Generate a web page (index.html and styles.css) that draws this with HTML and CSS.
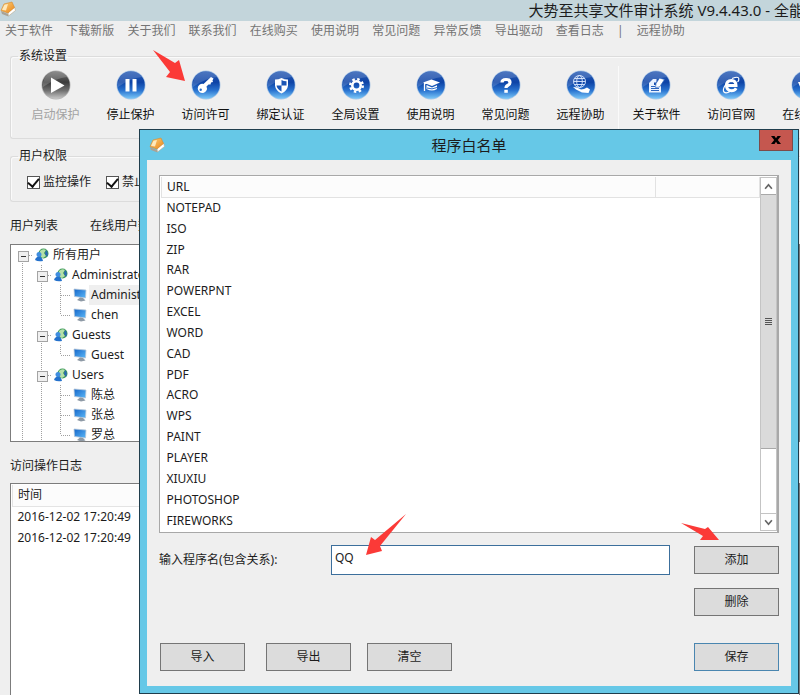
FILE: index.html
```html
<!DOCTYPE html>
<html lang="zh-CN">
<head>
<meta charset="utf-8">
<title>大势至共享文件审计系统</title>
<link rel="stylesheet" href="styles.css">
</head>
<body>
<svg class="defs" aria-hidden="true">
  <defs>
    <linearGradient id="blue" x1="0" y1="0" x2="0" y2="1">
      <stop offset="0" stop-color="#2a5cb4"/><stop offset=".4" stop-color="#0d43a6"/><stop offset=".7" stop-color="#2a74d0"/><stop offset="1" stop-color="#7cc8f8"/>
    </linearGradient>
    <linearGradient id="gray" x1="0" y1="0" x2="0" y2="1">
      <stop offset="0" stop-color="#707070"/><stop offset=".4" stop-color="#3c3c3c"/><stop offset=".7" stop-color="#707070"/><stop offset="1" stop-color="#c8c8c8"/>
    </linearGradient>
    <linearGradient id="gold" x1="0" y1="0" x2="1" y2="1">
      <stop offset="0" stop-color="#ffd27a"/><stop offset="1" stop-color="#e8851a"/>
    </linearGradient>
    <linearGradient id="screen" x1="0" y1="0" x2="1" y2="1">
      <stop offset="0" stop-color="#1565c8"/><stop offset="1" stop-color="#5cb8f8"/>
    </linearGradient>
    <symbol id="ball" viewBox="0 0 30 30">
      <circle cx="15" cy="15" r="14.5" fill="#a9c6e6"/>
      <circle cx="15" cy="15" r="13.8" fill="url(#blue)"/>
      <path d="M2 12A13.4 13.4 0 0 1 26 7Q15 8 2 17Z" fill="#fff" opacity=".16"/>
    </symbol>
    <symbol id="ball-gray" viewBox="0 0 30 30">
      <circle cx="15" cy="15" r="14.5" fill="#b5b5b5"/>
      <circle cx="15" cy="15" r="13.8" fill="url(#gray)"/>
      <path d="M2 12A13.4 13.4 0 0 1 26 7Q15 8 2 17Z" fill="#fff" opacity=".2"/>
    </symbol>
    <symbol id="app" viewBox="0 0 16 16">
      <path d="M1 10L8 13L8.500 15.500L2 13Z" fill="#a9a294"/>
      <path d="M8.500 15L8 11.500L14.500 6L15.500 9.500Z" fill="#fff" stroke="#b9a98c" stroke-width=".6"/>
      <path d="M4 3L12 1L14.500 6.500L8 12L1 9.500Z" fill="url(#gold)" stroke="#d98a2c" stroke-width=".6"/>
      <path d="M4.500 3.700L8 3L6 9.500L2 8.800Z" fill="#fff2cf" opacity=".85"/>
    </symbol>
    <symbol id="group" viewBox="0 0 14 14">
      <circle cx="8.500" cy="5.500" r="5" fill="#3d9a5b"/>
      <path d="M5 3Q8 0 11 2L9 5L11 8L8 10Q5 9 5 6Z" fill="#b5e0a8"/>
      <path d="M11 2Q14 5 12 9L10 6Z" fill="#2b68b4"/>
      <circle cx="4" cy="6.500" r="2.500" fill="#3f8ee0"/>
      <path d="M0 12Q1 8.500 4 8.500T8 13Q3 14 0 12Z" fill="#2471cc"/>
    </symbol>
    <symbol id="pc" viewBox="0 0 14 14">
      <path d="M1 1L13 2L12.500 10L1.500 8.500Z" fill="url(#screen)" stroke="#b8c8d8" stroke-width=".8"/>
      <path d="M7 9.500L10 10L12.500 12.500L8 13.500L4 12Z" fill="#8e9aa6"/>
    </symbol>
  </defs>
</svg>

<div class="window">
  <header class="titlebar">
    <svg class="app-icon"><use href="#app"/></svg>
    <h1 class="title">大势至共享文件审计系统 V9.4.43.0 - 全能</h1>
  </header>

  <nav class="menu">
    <a href="#">关于软件</a><a href="#">下载新版</a><a href="#">关于我们</a><a href="#">联系我们</a><a href="#">在线购买</a><a href="#">使用说明</a><a href="#">常见问题</a><a href="#">异常反馈</a><a href="#">导出驱动</a><a href="#">查看日志</a><span>|</span><a href="#">远程协助</a>
  </nav>

  <main class="body">
    <fieldset class="group">
      <legend>系统设置</legend>
      <div class="toolbar">
        <div class="tools">
          <button class="tool" disabled><svg viewBox="0 0 30 30"><use href="#ball-gray"/><path d="M10 7.500L23.500 15.500L10 23Z" fill="#fff"/></svg>启动保护</button>
          <button class="tool"><svg viewBox="0 0 30 30"><use href="#ball"/><path d="M9.500 9H13.500V21.500H9.500ZM16.500 9H20.500V21.500H16.500Z" fill="#fff"/></svg>停止保护</button>
          <button class="tool"><svg viewBox="0 0 30 30"><use href="#ball"/><path d="M20 7L22.500 8.500L21.500 10.500L22 12L20 12.500L19.500 14.500L17.500 14.500L15.500 16.500A4.600 4.600 0 1 1 12.500 14Z" fill="#fff"/><circle cx="9.700" cy="19.800" r="1.200" fill="#2a6cc8"/></svg>访问许可</button>
          <button class="tool"><svg viewBox="0 0 30 30"><use href="#ball"/><path d="M15.500 8Q18.500 9.500 22 9.500V15.500Q21.500 20.500 15.500 23.500Q9.500 20.500 9 15.500V9.500Q12.500 9.500 15.500 8Z" fill="#fff"/><path d="M15.500 10V15.500H20.500V11.200Q17.500 11.200 15.500 10ZM15.500 15.500V21.500Q11 19 10.500 15.500Z" fill="#1b55b5"/></svg>绑定认证</button>
          <button class="tool"><svg viewBox="0 0 30 30"><use href="#ball"/><circle cx="15.500" cy="15.500" r="4.200" fill="none" stroke="#fff" stroke-width="2.600"/><circle cx="15.500" cy="15.500" r="6.300" fill="none" stroke="#fff" stroke-width="2.400" stroke-dasharray="2.470 2.470"/></svg>全局设置</button>
          <button class="tool"><svg viewBox="0 0 30 30"><use href="#ball"/><path d="M15.500 9.500L24 12.500L16 16L7 12.500Z" fill="#fff"/><path d="M10.500 15L16 17.500L21 15.200V19Q16 22 10.500 19Z" fill="#fff"/><path d="M11 18Q16 20 21 17.500" stroke="#2a6cc8" fill="none"/><path d="M16 12.500L8.500 13.500V21" fill="none" stroke="#fff" stroke-width="1.300"/></svg>使用说明</button>
          <button class="tool"><svg viewBox="0 0 30 30"><use href="#ball"/><path d="M11 12.500Q11 9.500 15 9.500T19 12.500Q19 14.300 17 15.200T15 18" fill="none" stroke="#fff" stroke-width="3.200"/><path d="M13.300 19.800H16.800V22.800H13.300Z" fill="#fff"/></svg>常见问题</button>
          <button class="tool"><svg viewBox="0 0 30 30"><use href="#ball"/><g fill="none" stroke="#dceaff" stroke-width=".9"><circle cx="13.500" cy="11.500" r="6"/><ellipse cx="13.500" cy="11.500" rx="2.800" ry="6"/><path d="M7.500 11.500H19.500M8.500 8.500H18.500M8.500 14.500H18.500"/></g><path d="M7 17L11 17.500L15 19.500L18 19L21 17.500L24 19.500L22.500 23L16 22.500L10 19.500Z" fill="#fff"/></svg>远程协助</button>
        </div>
        <div class="tools tools-next">
          <button class="tool"><svg viewBox="0 0 30 30"><use href="#ball"/><path d="M8 13L12 9H15.500V12.500H13V15H20V22.500H8Z" fill="#e9f2ff"/><path d="M18.500 8L23.500 9.500L18.500 17L14.500 17.500L15 13.500Z" fill="#fff" stroke="#2a63bd" stroke-width=".7"/><path d="M10 16.500H14M10 18.500H18M10 20.500H18" stroke="#2a63bd"/></svg>关于软件</button>
          <button class="tool"><svg viewBox="0 0 30 30"><use href="#ball"/><path d="M20.200 18.200Q18.500 20.800 15.500 20.800Q10.500 20.500 10.500 15.500T15.500 10.500Q20 10.800 20 15.500H12" fill="none" stroke="#fff" stroke-width="3"/><path d="M16 8.500Q22.500 6 22.800 8.500T21.500 12M10 14Q6 20 8 22T14 21.500" fill="none" stroke="#fff" stroke-width="1.200"/></svg>访问官网</button>
          <button class="tool"><svg viewBox="0 0 30 30"><use href="#ball"/><path d="M7 12H22L20 19H10Z" fill="#fff"/></svg>在线购买</button>
        </div>
      </div>
    </fieldset>

    <fieldset class="group">
      <legend>用户权限</legend>
      <div class="checks">
        <label><input type="checkbox" checked>监控操作</label>
        <label><input type="checkbox" checked>禁止操作</label>
      </div>
    </fieldset>

    <div class="captions"><span>用户列表</span><span>在线用户数</span></div>

    <ul class="tree">
      <li><div class="row"><i class="g e first"></i><svg><use href="#group"/></svg><span>所有用户</span></div>
        <ul>
          <li><div class="row"><i class="g v"></i><i class="g e"></i><svg><use href="#group"/></svg><span>Administrators</span></div>
            <ul>
              <li class="row"><i class="g v"></i><i class="g v"></i><i class="g v t"></i><svg><use href="#pc"/></svg><span class="sel">Administrator</span></li>
              <li class="row"><i class="g v"></i><i class="g v"></i><i class="g l t"></i><svg><use href="#pc"/></svg><span>chen</span></li>
            </ul>
          </li>
          <li><div class="row"><i class="g v"></i><i class="g e"></i><svg><use href="#group"/></svg><span>Guests</span></div>
            <ul>
              <li class="row"><i class="g v"></i><i class="g v"></i><i class="g l t"></i><svg><use href="#pc"/></svg><span>Guest</span></li>
            </ul>
          </li>
          <li><div class="row"><i class="g v"></i><i class="g e"></i><svg><use href="#group"/></svg><span>Users</span></div>
            <ul>
              <li class="row"><i class="g v"></i><i class="g v"></i><i class="g v t"></i><svg><use href="#pc"/></svg><span>陈总</span></li>
              <li class="row"><i class="g v"></i><i class="g v"></i><i class="g v t"></i><svg><use href="#pc"/></svg><span>张总</span></li>
              <li class="row"><i class="g v"></i><i class="g v"></i><i class="g l t"></i><svg><use href="#pc"/></svg><span>罗总</span></li>
            </ul>
          </li>
        </ul>
      </li>
    </ul>

    <div class="captions">访问操作日志</div>

    <div class="log">
      <table>
        <thead><tr><th>时间</th></tr></thead>
        <tbody><tr><td>2016-12-02 17:20:49</td></tr><tr><td>2016-12-02 17:20:49</td></tr></tbody>
      </table>
    </div>
  </main>
</div>

<section class="dialog" role="dialog" aria-labelledby="dlg-title">
  <header class="dialog-bar">
    <svg class="app-icon"><use href="#app"/></svg>
    <h2 id="dlg-title">程序白名单</h2>
    <button class="close" aria-label="关闭"><svg viewBox="0 0 10 8"><path d="M0 0H3.500L5 2.200L6.500 0H10L6.800 4L10 8H6.500L5 5.800L3.500 8H0L3.200 4Z"/></svg></button>
  </header>
  <div class="dialog-body">
    <div class="list">
      <div class="list-main">
        <table>
          <thead><tr><th>URL</th><th class="spare"></th></tr></thead>
          <tbody>
            <tr><td>NOTEPAD</td></tr><tr><td>ISO</td></tr><tr><td>ZIP</td></tr><tr><td>RAR</td></tr>
            <tr><td>POWERPNT</td></tr><tr><td>EXCEL</td></tr><tr><td>WORD</td></tr><tr><td>CAD</td></tr>
            <tr><td>PDF</td></tr><tr><td>ACRO</td></tr><tr><td>WPS</td></tr><tr><td>PAINT</td></tr>
            <tr><td>PLAYER</td></tr><tr><td>XIUXIU</td></tr><tr><td>PHOTOSHOP</td></tr><tr><td>FIREWORKS</td></tr>
          </tbody>
        </table>
      </div>
      <div class="scroll">
        <button aria-label="向上滚动"><svg viewBox="0 0 8 6"><path d="M1 5L4 1.500L7 5"/></svg></button>
        <div class="track"><div class="thumb"><i></i></div></div>
        <button aria-label="向下滚动"><svg viewBox="0 0 8 6"><path d="M1 1L4 4.500L7 1"/></svg></button>
      </div>
    </div>
    <div class="form">
      <label for="prog">输入程序名(包含关系):</label>
      <input id="prog" type="text" value="QQ">
      <button class="btn">添加</button>
    </div>
    <div class="form end"><button class="btn">删除</button></div>
    <div class="form actions">
      <button class="btn">导入</button><button class="btn">导出</button><button class="btn">清空</button><button class="btn save">保存</button>
    </div>
  </div>
</section>

<svg class="arrow arrow-key" viewBox="0 0 32 32"><path d="M0 0L22 13L26 10L32 31L13 27L17 22Z"/></svg>
<svg class="arrow arrow-input" viewBox="0 0 40 42"><path d="M40 0L14 32L16 37L0 41L5 23L9 26Z"/></svg>
<svg class="arrow arrow-add" viewBox="0 0 38 18"><path d="M0 0L24 6L27 4L38 17L19 17L22 13Z"/></svg>
</body>
</html>
```
FILE: styles.css
```css
* { box-sizing: border-box; }

body {
  margin: 0;
  height: 100vh;
  position: relative;
  overflow: hidden;
  background: #efefef;
  color: #1c1c1c;
  font: 12px/20px "Noto Sans", "Noto Sans CJK SC", sans-serif;
}

button, input { font: inherit; color: inherit; }
ul { list-style: none; margin: 0; padding: 0; }
table { border-collapse: collapse; width: 100%; }
th { font-weight: normal; text-align: left; }
.defs { position: absolute; width: 0; height: 0; }

/* Main window */
.window { height: 100%; display: flex; flex-direction: column; }

.titlebar {
  display: flex;
  justify-content: space-between;
  height: 21px;
  background: #c3d5db;
  overflow: hidden;
}
.app-icon { width: 16px; height: 16px; flex: none; }
.titlebar .app-icon { margin-top: 1px; }
.title {
  flex: none;
  margin: 0 -4px 0 0;
  font-size: 15px;
  line-height: 20px;
  font-weight: normal;
  white-space: nowrap;
}

.menu {
  display: flex;
  justify-content: space-between;
  max-width: 690px;
  padding: 0 5px;
  color: #747474;
}
.menu a { color: inherit; text-decoration: none; }

.body {
  flex: 1;
  min-height: 0;
  display: flex;
  flex-direction: column;
  padding: 5px 0 0 10px;
}

.group {
  margin: 0;
  padding: 0 0 0 7px;
  min-width: 0;
  border: 1px solid #dcdcdc;
  border-right: 0;
  border-radius: 3px 0 0 3px;
  box-shadow: inset 1px 1px #fafafa;
}
.group + .group { margin-top: 7px; }
.group legend { padding: 0 1px; }

.toolbar { display: flex; height: 72px; overflow: hidden; }
.tools { flex: none; width: 600px; display: grid; grid-template-columns: repeat(8, 1fr); }
.tools-next { border-left: 1px solid #fafafa; }
.tool {
  display: flex;
  flex-direction: column;
  align-items: center;
  gap: 5px;
  padding: 4px 0 0;
  border: 0;
  background: none;
  color: #111;
  white-space: nowrap;
}
.tool:disabled { color: #a3a3a3; }
.tool svg { width: 30px; height: 30px; flex: none; }

.checks { display: flex; gap: 15px; padding: 6px 9px 9px; }
.checks label { display: flex; align-items: center; gap: 3px; }
.checks input {
  appearance: none;
  width: 13px;
  height: 13px;
  margin: 0;
  border: 1px solid #555;
  background: #fff;
  display: grid;
  place-items: center;
}
.checks input:checked::before {
  content: "";
  width: 5px;
  height: 9px;
  margin-top: -2px;
  border: solid #111;
  border-width: 0 2px 2px 0;
  transform: rotate(40deg);
}

.captions { display: flex; gap: 32px; padding-top: 14px; margin-bottom: 8px; }

/* User tree */
.tree {
  flex: none;
  max-height: 198px;
  overflow: hidden;
  padding-left: 2px;
  border: 1px solid #7c7c7c;
  background: #fff;
}
.row { display: flex; align-items: center; height: 20px; }
.row svg { width: 14px; height: 14px; margin: 0 2px 0 3px; flex: none; }
.row span { padding: 0 2px; }
.row .sel { background: #efefef; }
.g { position: relative; flex: none; width: 19px; height: 20px; }
.v { background: repeating-linear-gradient(#a0a0a0 0 1px, #fff 1px 2px) 9px 0 / 1px 100% no-repeat; }
.l { background: repeating-linear-gradient(#a0a0a0 0 1px, #fff 1px 2px) 9px 0 / 1px 10px no-repeat; }
.e { background: repeating-linear-gradient(#a0a0a0 0 1px, #fff 1px 2px) 9px 0 / 1px 100% no-repeat; }
.first { background-position: 9px 10px; }
.t::after, .e::after {
  content: "";
  position: absolute;
  left: 10px;
  right: 0;
  top: 10px;
  border-top: 1px dotted #a0a0a0;
}
.e::before {
  content: "";
  position: absolute;
  z-index: 1;
  left: 5px;
  top: 6px;
  width: 9px;
  height: 9px;
  border: 1px solid #a4a4a4;
  background: linear-gradient(#333, #333) center / 5px 1px no-repeat #f0f0f0;
}

/* Access log */
.captions + .log { flex: 1; min-height: 0; }
.log { padding: 1px 1px 0; border: 1px solid #7c7c7c; border-bottom: 0; background: #fff; }
.tree + .captions { margin-bottom: 7px; }
.log th { border: 1px solid #e4e4e4; border-top: 0; background: #fcfcfc; }
.log th, .log td { height: 21px; padding: 0 5px; line-height: 18px; }

/* Whitelist dialog */
.dialog {
  position: absolute;
  inset: 129px 1px 1px 139px;
  display: flex;
  flex-direction: column;
  padding: 0 7px 7px;
  border: 1px solid #1f3d4c;
  background: #66c8e7;
}
.dialog-bar { position: relative; height: 30px; display: flex; align-items: center; padding-left: 2px; }
.dialog-bar h2 {
  flex: 1;
  margin: 0 18px 0 0;
  font-size: 15px;
  font-weight: normal;
  text-align: center;
}
.close {
  position: absolute;
  top: 0;
  right: -2px;
  width: 34px;
  height: 21px;
  padding: 0;
  border: 1px solid #7d4a4a;
  border-top: 0;
  background: #c5574f;
}
.close svg { width: 10px; height: 8px; }

.dialog-body {
  flex: 1;
  min-height: 0;
  display: flex;
  flex-direction: column;
  padding: 15px 12px;
  background: #efefef;
}

.list {
  flex: 1;
  min-height: 0;
  display: flex;
  padding: 1px 0 1px 1px;
  border: 2px solid #a8a8a8;
  border-width: 1px 2px 1px 1px;
  background: #fff;
}
.list-main { flex: 1; }
.list table { height: 100%; }
.list th { height: 20px; border: 1px solid #e2e2e2; border-top: 0; background: #fcfcfc; }
.list .spare { width: 104px; }
.list th, .list td { padding: 0 5px; line-height: 18px; }
.scroll { width: 17px; display: flex; flex-direction: column; border: 1px solid #c4c4c4; }
.scroll button { height: 16px; padding: 0; border: 0; background: #fff; display: grid; place-items: center; }
.scroll svg { width: 9px; height: 7px; fill: none; stroke: #666; stroke-width: 1.500; }
.track { flex: 1; border-bottom: 1px solid #c4c4c4; }
.thumb { height: 80%; display: grid; place-items: center; border: solid #a8a8a8; border-width: 1px 0; background: #dadada; }
.thumb i { width: 7px; height: 7px; background: repeating-linear-gradient(#555 0 1px, transparent 1px 2px); }

.form { display: flex; align-items: center; margin-top: 14px; }
.list + .form { margin-top: 12px; }
.form label { flex: none; width: 172px; }
.form input {
  flex: 1;
  min-width: 0;
  height: 30px;
  margin-right: 24px;
  padding: 0 3px 6px;
  border: 1px solid #3c6f9c;
  background: #fff;
  outline: 0;
}
.btn { flex: none; width: 85px; height: 28px; padding: 0; border: 1px solid #757575; background: #dcdcdc; }
.end { justify-content: flex-end; }
.list ~ .end { margin-top: 13px; }
.list ~ .actions { margin-top: 27px; }
.actions { gap: 16px; padding-left: 1px; }
.actions .btn:nth-child(2) { margin-left: 5px; }
.save { margin-left: auto; border-color: #4a86b0; }

/* Pointer arrows over the windows */
.arrow { position: absolute; fill: #fb3a37; }
.arrow-key { left: 153px; top: 50px; width: 32px; height: 32px; }
.arrow-input { left: 366px; top: 514px; width: 40px; height: 42px; }
.arrow-add { left: 681px; top: 523px; width: 38px; height: 18px; }
```
